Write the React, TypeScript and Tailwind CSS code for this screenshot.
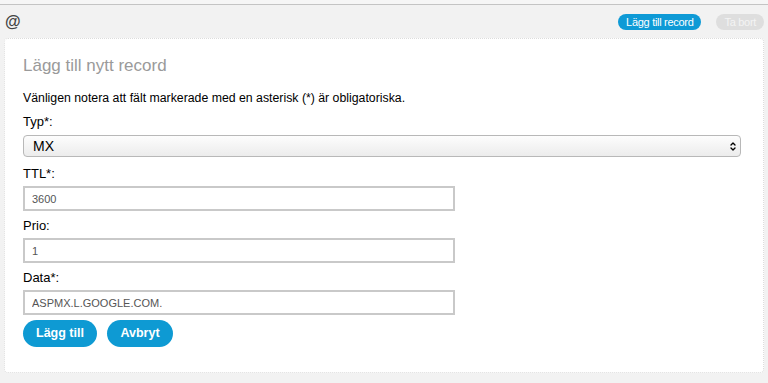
import { ChevronDown, ChevronUp } from "lucide-react";

const font = { fontFamily: '"Liberation Sans", Arial, sans-serif' };

function Field({ label, value }: { label: string; value: string }) {
  return (
    <div className="flex flex-col">
      <label className="text-[13px] leading-[15px] text-black">{label}</label>
      <input
        readOnly
        value={value}
        className="mt-[5px] h-[25px] w-[432px] border-2 border-[#c9c9c9] bg-white px-[7px] text-[11px] text-[#555] outline-none"
      />
    </div>
  );
}

export default function App() {
  return (
    <div className="h-[383px] w-[768px] overflow-hidden bg-[#f2f2f2]" style={font}>
      <div className="h-[4px] bg-[#f6f6f6]" />
      <div className="h-px bg-[#c4c4c4]" />
      <div className="flex h-[33px] items-center justify-between pl-[5px] pr-[4px]">
        <span className="text-[16px] font-bold text-[#444]">@</span>
        <div className="flex items-center gap-[15px]">
          <button className="h-[16px] rounded-full bg-[#0e9ad6] px-[8px] text-[11px] leading-[16px] tracking-[-0.3px] text-white">
            Lägg till record
          </button>
          <button className="h-[16px] rounded-full bg-[#dedede] px-[8px] text-[11px] leading-[16px] tracking-[-0.3px] text-[#f4f4f4]">
            Ta bort
          </button>
        </div>
      </div>
      <div className="mx-[4px] h-[335px] rounded-[4px] border border-dotted border-[#dcdcdc] bg-white px-[18px] pt-[17px]">
        <h1 className="text-[17px] leading-[20px] text-[#9a9a9a]">Lägg till nytt record</h1>
        <p className="mt-[15px] text-[12.3px] leading-[15px] text-black">
          Vänligen notera att fält markerade med en asterisk (*) är obligatoriska.
        </p>
        <div className="mt-[8px] flex flex-col">
          <label className="text-[13px] leading-[15px] text-black">Typ*:</label>
          <div className="mt-[6px] flex h-[22px] w-[718px] items-center justify-between rounded-[4px] border border-[#b8b8b8] bg-gradient-to-b from-[#fdfdfd] to-[#ececec] pl-[9px] pr-[3px]">
            <span className="text-[14px] text-black">MX</span>
            <span className="flex flex-col items-center leading-none">
              <ChevronUp className="-mb-[3px] h-[8px] w-[8px] text-black" strokeWidth={4} />
              <ChevronDown className="h-[8px] w-[8px] text-black" strokeWidth={4} />
            </span>
          </div>
        </div>
        <div className="mt-[9px] flex flex-col gap-[7px]">
          <Field label="TTL*:" value="3600" />
          <Field label="Prio:" value="1" />
          <Field label="Data*:" value="ASPMX.L.GOOGLE.COM." />
        </div>
        <div className="mt-[5px] flex gap-[10px]">
          <button className="h-[27px] w-[74px] rounded-full bg-[#0e9ad3] text-[12.5px] font-bold text-white">Lägg till</button>
          <button className="h-[27px] w-[66px] rounded-full bg-[#0e9ad3] text-[12.5px] font-bold text-white">Avbryt</button>
        </div>
      </div>
    </div>
  );
}
